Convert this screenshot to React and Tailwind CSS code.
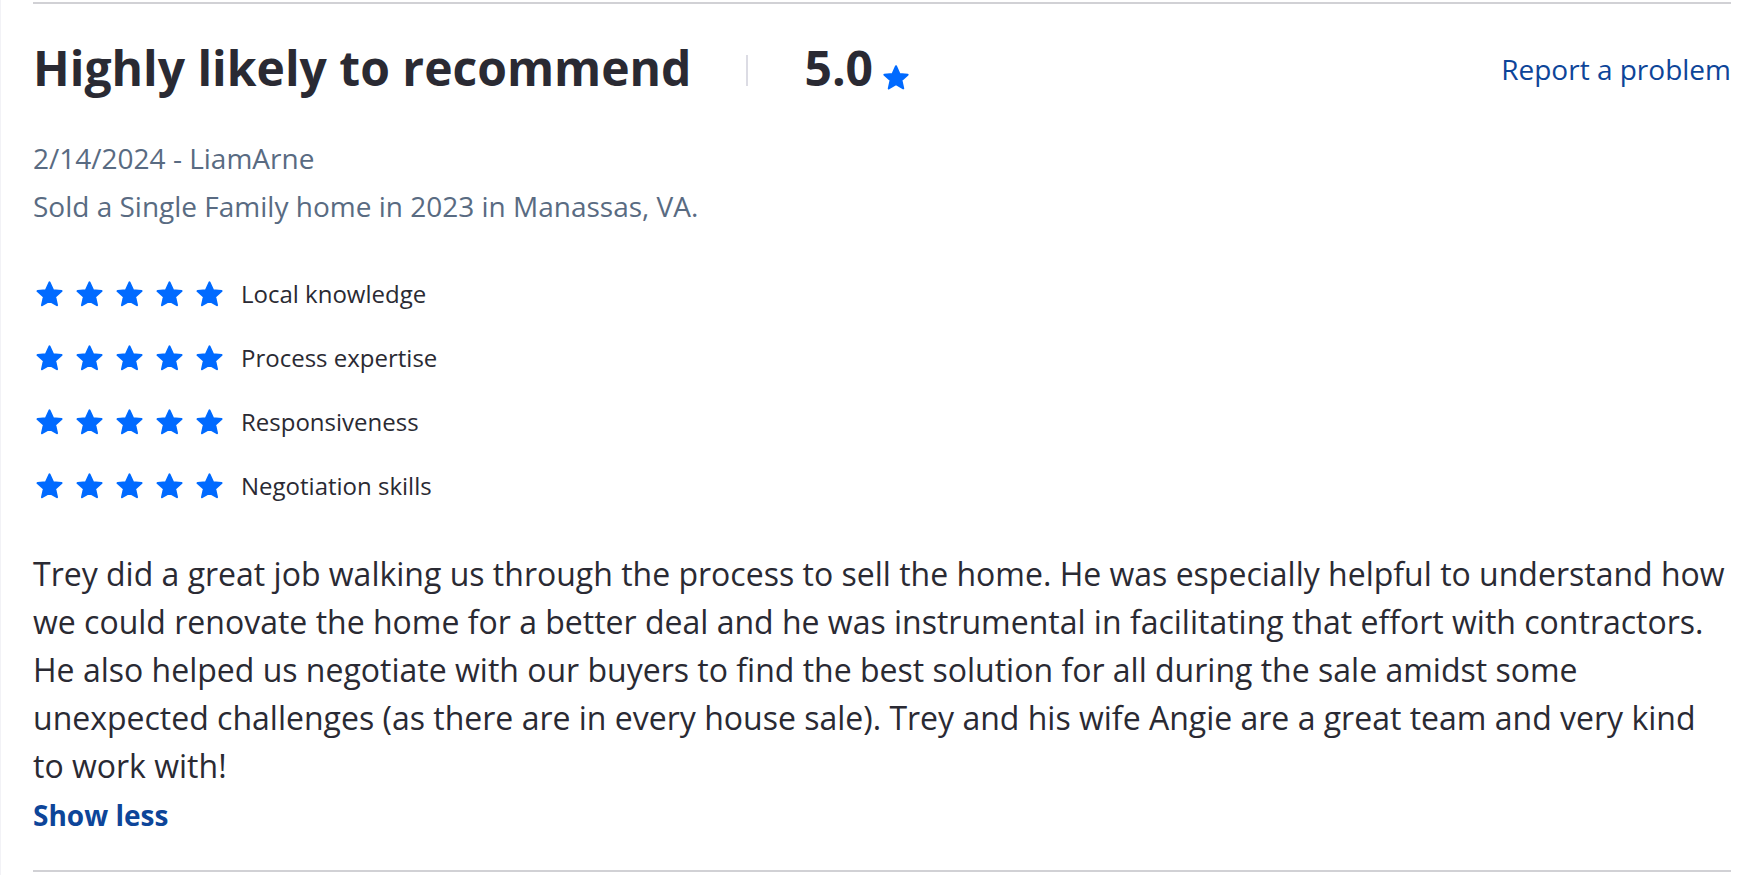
import React from "react";

function Star({ size = 28, className = "" }) {
  return (
    <svg width={size} height={size} viewBox="0 0 24 24" className={className} aria-hidden="true">
      <path
        d="M12 2.6 L14.75 8.7 L21.3 9.35 L16.35 13.8 L17.8 20.3 L12 16.95 L6.2 20.3 L7.65 13.8 L2.7 9.35 L9.25 8.7 Z"
        fill="#006aff"
        stroke="#006aff"
        strokeWidth="1.6"
        strokeLinejoin="round"
      />
    </svg>
  );
}

const ratings = ["Local knowledge", "Process expertise", "Responsiveness", "Negotiation skills"];

export default function App() {
  return (
    <div className="min-h-screen bg-white border-l border-[#f2f2f6]" style={{ fontFamily: '"Open Sans", "Noto Sans", sans-serif' }}>
      <div className="pl-[32px] pr-[16px] pt-[2px]">
        <div className="border-t-2 border-[#d1d1d5] pt-[32px] pb-[35px] border-b-2 border-b-[#d1d1d5]">
          <div className="flex items-center h-[64px]">
            <h2 className="text-[48px] leading-[64px] font-bold text-[#2a2a33]">Highly likely to recommend</h2>
            <div className="w-[2px] h-[31px] bg-[#dcdce4] ml-[55px] mr-[56px] mt-[4px]"></div>
            <div className="flex items-center">
              <span className="text-[48px] leading-[64px] font-bold text-[#2a2a33]">5.0</span>
              <Star size={30} className="ml-[8px] mt-[20px]" />
            </div>
            <a href="#" className="ml-auto text-[28px] leading-[38px] text-[#0d4599] mt-[2px]">Report a problem</a>
          </div>

          <div className="mt-[34px] text-[28px] leading-[48px] text-[#596b82]">
            <div>2/14/2024 - LiamArne</div>
            <div>Sold a Single Family home in 2023 in Manassas, VA.</div>
          </div>

          <div className="mt-[32px] flex flex-col">
            {ratings.map((r) => (
              <div key={r} className="flex items-center h-[64px]">
                <div className="flex gap-[12px] ml-[2px]">
                  <Star size={31} className="-m-[1.5px]" />
                  <Star size={31} className="-m-[1.5px]" />
                  <Star size={31} className="-m-[1.5px]" />
                  <Star size={31} className="-m-[1.5px]" />
                  <Star size={31} className="-m-[1.5px]" />
                </div>
                <span className="ml-[18px] text-[24px] leading-[34px] text-[#2a2a33]">{r}</span>
              </div>
            ))}
          </div>

          <p className="mt-[32px] text-[32px] leading-[48px] text-[#2a2a33]">
            Trey did a great job walking us through the process to sell the home. He was especially helpful to understand how we could renovate the home for a better deal and he was instrumental in facilitating that effort with contractors. He also helped us negotiate with our buyers to find the best solution for all during the sale amidst some unexpected challenges (as there are in every house sale). Trey and his wife Angie are a great team and very kind to work with!
          </p>
          <a href="#" className="block mt-[5px] text-[28px] leading-[40px] font-bold text-[#0d4599]">Show less</a>
        </div>
      </div>
    </div>
  );
}
